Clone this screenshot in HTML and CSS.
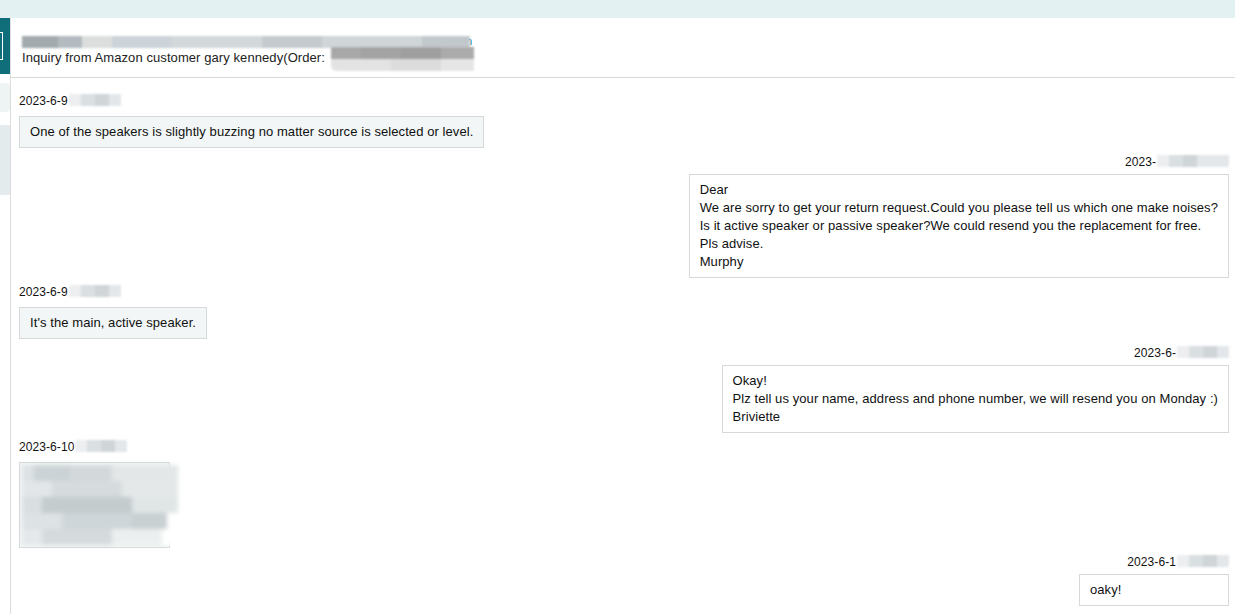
FILE: index.html
```html
<!DOCTYPE html>
<html lang="en">
<head>
  <meta charset="UTF-8" />
  <meta name="viewport" content="width=device-width, initial-scale=1.0" />
  <title>Buyer Messages</title>
  <link rel="stylesheet" href="styles.css">
</head>
<body>
  <div class="topbar"></div>
  <div class="layout">
    <div class="sidebar">
      <div class="side-tab"><span class="side-tab-box"></span></div>
      <div class="side-pill"></div>
      <div class="side-block"></div>
    </div>

    <div class="main">
      <div class="header">
        <div class="header-name"><span class="mosaic mosaic-name"></span><span class="link-tail">n</span></div>
        <div class="header-subject">Inquiry from Amazon customer gary kennedy(Order: <span class="mosaic mosaic-order"></span></div>
      </div>

      <div class="thread">
        <div class="msg msg-in">
          <div class="msg-date">2023-6-9<span class="mosaic mosaic-date"></span></div>
          <div class="bubble">One of the speakers is slightly buzzing no matter source is selected or level.</div>
        </div>

        <div class="msg msg-out">
          <div class="msg-date">2023-<span class="mosaic mosaic-date wide"></span></div>
          <div class="bubble">Dear<br>We are sorry to get your return request.Could you please tell us which one make noises?<br>Is it active speaker or passive speaker?We could resend you the replacement for free.<br>Pls advise.<br>Murphy</div>
        </div>

        <div class="msg msg-in">
          <div class="msg-date">2023-6-9<span class="mosaic mosaic-date"></span></div>
          <div class="bubble">It's the main, active speaker.</div>
        </div>

        <div class="msg msg-out">
          <div class="msg-date">2023-6-<span class="mosaic mosaic-date"></span></div>
          <div class="bubble">Okay!<br>Plz tell us your name, address and phone number, we will resend you on Monday :)<br>Briviette</div>
        </div>

        <div class="msg msg-in">
          <div class="msg-date">2023-6-10<span class="mosaic mosaic-date"></span></div>
          <div class="bubble bubble-image"><span class="mosaic mosaic-image"></span></div>
        </div>

        <div class="msg msg-out">
          <div class="msg-date">2023-6-1<span class="mosaic mosaic-date"></span></div>
          <div class="bubble bubble-short">oaky!</div>
        </div>
      </div>
    </div>
  </div>
</body>
</html>
```

FILE: styles.css
```css
body {
  font-family: 'Liberation Sans', Arial, sans-serif;
  font-size: 13px;
  letter-spacing: 0.08px;
  color: #0f1111;
  background: #fff;
  margin: 0;
  padding: 0;
  overflow: hidden;
}
.topbar {
  height: 18px;
  background: #e3f1f3;
}
.layout {
  display: flex;
  height: 596px;
}
.sidebar {
  width: 10px;
  flex-shrink: 0;
  border-right: 1px solid #dcdcdc;
  display: flex;
  flex-direction: column;
}
.side-tab {
  height: 56px;
  background: #0f6e79;
  padding-top: 14px;
  box-sizing: border-box;
}
.side-tab-box {
  display: block;
  width: 2px;
  height: 26px;
  border: 1px solid #fff;
  border-left: none;
}
.side-pill {
  height: 29px;
  margin-top: 9px;
  background: #eef3f4;
  border-radius: 0 4px 4px 0;
}
.side-block {
  height: 70px;
  margin-top: 13px;
  background: #e3ebed;
}
.main {
  flex: 1;
  min-width: 0;
}
.header {
  height: 60px;
  border-bottom: 1px solid #d9d9d9;
  padding: 17px 0 0 11px;
  box-sizing: border-box;
  overflow: hidden;
}
.header-name {
  display: flex;
  align-items: center;
  height: 13px;
}
.link-tail {
  color: #007185;
  font-size: 11px;
  line-height: 11px;
  margin-left: -4px;
}
.header-subject {
  display: flex;
  align-items: flex-start;
  font-size: 13px;
  line-height: 14px;
  margin-top: 3px;
  color: #222;
  white-space: nowrap;
}
.mosaic {
  display: inline-block;
  filter: blur(1.2px);
}
.mosaic-name {
  width: 448px;
  height: 12px;
  background: linear-gradient(90deg, #a2aaae 0 36px, #b3bbc0 36px 60px, #dcdedd 60px 90px, #ccd4d9 90px 150px, #d3d8da 150px 240px, #c4cacd 240px 300px, #d0d5d8 300px 400px, #c2c9cd 400px 448px);
}
.mosaic-order {
  width: 143px;
  height: 24px;
  margin: -4px 0 0 6px;
  background:
    linear-gradient(90deg, #a8a8a8 0 30px, #a3a3a3 30px 70px, #9f9fa0 70px 110px, #ababab 110px 143px) top / 100% 12px no-repeat,
    linear-gradient(90deg, #e3e3e3 0 60px, #dcdcdc 60px 110px, #e6e6e6 110px 143px) bottom / 100% 12px no-repeat;
  border-radius: 0 0 0 6px;
}
.mosaic-date {
  width: 52px;
  height: 12px;
  margin-left: 1px;
  vertical-align: -1px;
  background: linear-gradient(90deg, #eceef0 0 12px, #dadfe2 12px 26px, #d0d5d8 26px 40px, #e4e7e9 40px 52px);
}
.mosaic-date.wide {
  width: 72px;
}
.thread {
  padding: 15px 6px 0 8px;
  display: flex;
  flex-direction: column;
}
.msg {
  display: flex;
  flex-direction: column;
  margin-bottom: 6px;
}
.msg-in {
  align-items: flex-start;
}
.msg-out {
  align-items: flex-end;
}
.msg-date {
  font-size: 12px;
  line-height: 16px;
  color: #111;
  white-space: nowrap;
  margin-bottom: 7px;
}
.msg-out .msg-date {
  margin-bottom: 4px;
}
.bubble {
  border: 1px solid #d5d9d9;
  padding: 6px 10px;
  line-height: 18px;
  background: #fff;
}
.msg-in .bubble {
  background: #f3f6f6;
}
.bubble-short {
  min-width: 128px;
}
.bubble-image {
  padding: 0;
  width: 149px;
  height: 84px;
  overflow: visible;
}
.mosaic-image {
  width: 156px;
  height: 80px;
  margin: 2px 0 0 2px;
  filter: blur(2px);
  background:
    linear-gradient(90deg, #dde2e4 0 12px, #ccd3d6 12px 48px, #d3d9db 48px 90px, #e3e7e8 90px 156px) 0 0 / 100% 16px no-repeat,
    linear-gradient(90deg, #e2e6e8 0 30px, #d6dcde 30px 100px, #e4e8e9 100px 156px) 0 16px / 100% 16px no-repeat,
    linear-gradient(90deg, #d9dfe1 0 20px, #c4ccce 20px 110px, #e0e5e6 110px 156px) 0 32px / 100% 16px no-repeat,
    linear-gradient(90deg, #dde2e4 0 40px, #cfd6d9 40px 110px, #c9d0d2 110px 145px, #fff 145px) 0 48px / 100% 16px no-repeat,
    linear-gradient(90deg, #e4e8ea 0 20px, #d5dbdd 20px 90px, #ecefef 90px 140px, #fff 140px) 0 64px / 100% 16px no-repeat;
}
```
